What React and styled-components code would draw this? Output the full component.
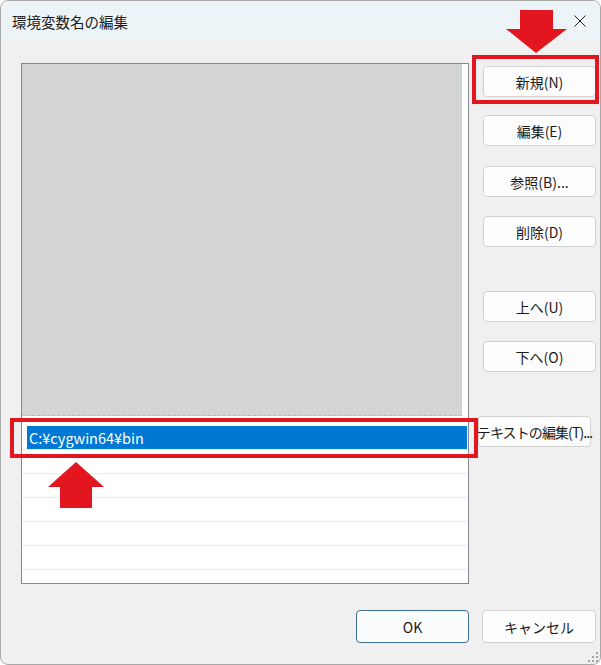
import React from "react";
import styled, { createGlobalStyle } from "styled-components";

const GlobalStyle = createGlobalStyle`
  html, body {
    margin: 0;
    padding: 0;
    background: #ffffff;
  }
  body {
    font-family: "Noto Sans CJK JP", "Noto Sans", sans-serif;
  }
`;

const Window = styled.div`
  position: relative;
  box-sizing: border-box;
  width: 601px;
  height: 665px;
  border: 1px solid #a9a9a9;
  border-radius: 8px;
  background: #f0f0f0;
  display: flex;
  flex-direction: column;
  overflow: hidden;
`;

const TitleBar = styled.div`
  height: 39px;
  background: #edf4f7;
  display: flex;
  align-items: center;
  justify-content: space-between;
  padding: 0 14px 0 11px;
`;

const Title = styled.div`
  font-size: 14.5px;
  color: #1b1b1b;
  padding-top: 2px;
`;

const CloseIcon = styled.svg`
  width: 12px;
  height: 12px;
  margin-top: 1px;
`;

const Body = styled.div`
  flex: 1;
  display: grid;
  grid-template-columns: 448px 113px;
  grid-template-rows: 521px auto;
  column-gap: 14px;
  padding: 23px 3px 0 20px;
`;

const ListBox = styled.div`
  box-sizing: border-box;
  border: 1px solid #848890;
  background: #ffffff;
  display: flex;
  flex-direction: column;
  overflow: hidden;
`;

const EmptyArea = styled.div`
  height: 351px;
  margin-right: 6px;
  background: #d3d4d6;
  border-bottom: 1px dashed #b9babc;
  flex-shrink: 0;
`;

const Rows = styled.div`
  padding-top: 10px;
  display: flex;
  flex-direction: column;
`;

const Row = styled.div`
  box-sizing: border-box;
  height: 24px;
  flex-shrink: 0;
  border-bottom: 1px solid #ebebeb;
  padding: 0 1px 0 5px;
  display: flex;
`;

const Selected = styled.div`
  flex: 1;
  background: #0078d4;
  color: #ffffff;
  font-size: 14.5px;
  line-height: 23px;
  padding-left: 2px;
`;

const ButtonColumn = styled.div`
  display: flex;
  flex-direction: column;
  padding-top: 3px;
`;

const Button = styled.button`
  box-sizing: border-box;
  width: ${(p) => p.$width || 113}px;
  height: ${(p) => p.$height || 31}px;
  margin-top: ${(p) => p.$gap || 0}px;
  margin-left: ${(p) => p.$shift || 0}px;
  padding: 0;
  background: ${(p) => (p.$primary ? "#fbfcfd" : "#fdfdfd")};
  border: 1px solid ${(p) => (p.$primary ? "#40708f" : "#d2d2d2")};
  border-radius: 4px;
  font-family: "Noto Sans CJK JP", "Noto Sans", sans-serif;
  font-size: 14px;
  color: #1b1b1b;
  white-space: nowrap;
  letter-spacing: ${(p) => (p.$tight ? "-0.9px" : "0")};
  display: flex;
  align-items: center;
  justify-content: center;
  overflow: visible;
`;

const Footer = styled.div`
  grid-column: 1 / span 2;
  display: flex;
  justify-content: flex-end;
  gap: 13px;
  margin-top: 26px;
`;

const Highlight = styled.div`
  position: absolute;
  box-sizing: border-box;
  left: ${(p) => p.$x}px;
  top: ${(p) => p.$y}px;
  width: ${(p) => p.$w}px;
  height: ${(p) => p.$h}px;
  border: 4px solid #e3161f;
  pointer-events: none;
`;

const Arrow = styled.svg`
  position: absolute;
  left: ${(p) => p.$x}px;
  top: ${(p) => p.$y}px;
  fill: #e3161f;
`;

const Grip = styled.svg`
  position: absolute;
  right: 2px;
  bottom: 2px;
  fill: #a2a2a2;
`;

const sideButtons = [
  { label: "新規(N)", gap: 0 },
  { label: "編集(E)", gap: 18 },
  { label: "参照(B)...", gap: 20 },
  { label: "削除(D)", gap: 19 },
  { label: "上へ(U)", gap: 44 },
  { label: "下へ(O)", gap: 19 },
  { label: "テキストの編集(T)...", gap: 44, shift: -5, tight: true },
];

const App = () => {
  return (
    <>
      <GlobalStyle />
      <Window>
        <TitleBar>
          <Title>環境変数名の編集</Title>
          <CloseIcon viewBox="0 0 12 12">
            <path d="M0.5 0.5 L11.5 11.5 M11.5 0.5 L0.5 11.5" stroke="#1b1b1b" strokeWidth="1" />
          </CloseIcon>
        </TitleBar>
        <Body>
          <ListBox>
            <EmptyArea />
            <Rows>
              <Row>
                <Selected>C:¥cygwin64¥bin</Selected>
              </Row>
              {[0, 1, 2, 3, 4, 5].map((i) => (
                <Row key={i} />
              ))}
            </Rows>
          </ListBox>
          <ButtonColumn>
            {sideButtons.map((b) => (
              <Button key={b.label} $gap={b.gap} $shift={b.shift} $tight={b.tight}>
                {b.label}
              </Button>
            ))}
          </ButtonColumn>
          <Footer>
            <Button $primary $height={33}>OK</Button>
            <Button $width={114} $height={33}>キャンセル</Button>
          </Footer>
        </Body>

        <Highlight $x={471} $y={54} $w={127} $h={49} />
        <Highlight $x={9} $y={417} $w={468} $h={40} />

        <Arrow $x={504} $y={8} width="64" height="45" viewBox="0 0 64 45">
          <polygon points="15,1 48,1 48,20 62,20 31,44 1,20 15,20" />
        </Arrow>
        <Arrow $x={46} $y={460} width="58" height="48" viewBox="0 0 58 48">
          <polygon points="29,1 57,26 45,26 45,47 13,47 13,26 1,26" />
        </Arrow>

        <Grip width="10" height="10" viewBox="0 0 10 10">
          <rect x="8" y="0" width="2" height="2" />
          <rect x="4" y="4" width="2" height="2" />
          <rect x="8" y="4" width="2" height="2" />
          <rect x="0" y="8" width="2" height="2" />
          <rect x="4" y="8" width="2" height="2" />
          <rect x="8" y="8" width="2" height="2" />
        </Grip>
      </Window>
    </>
  );
};

export default App;
